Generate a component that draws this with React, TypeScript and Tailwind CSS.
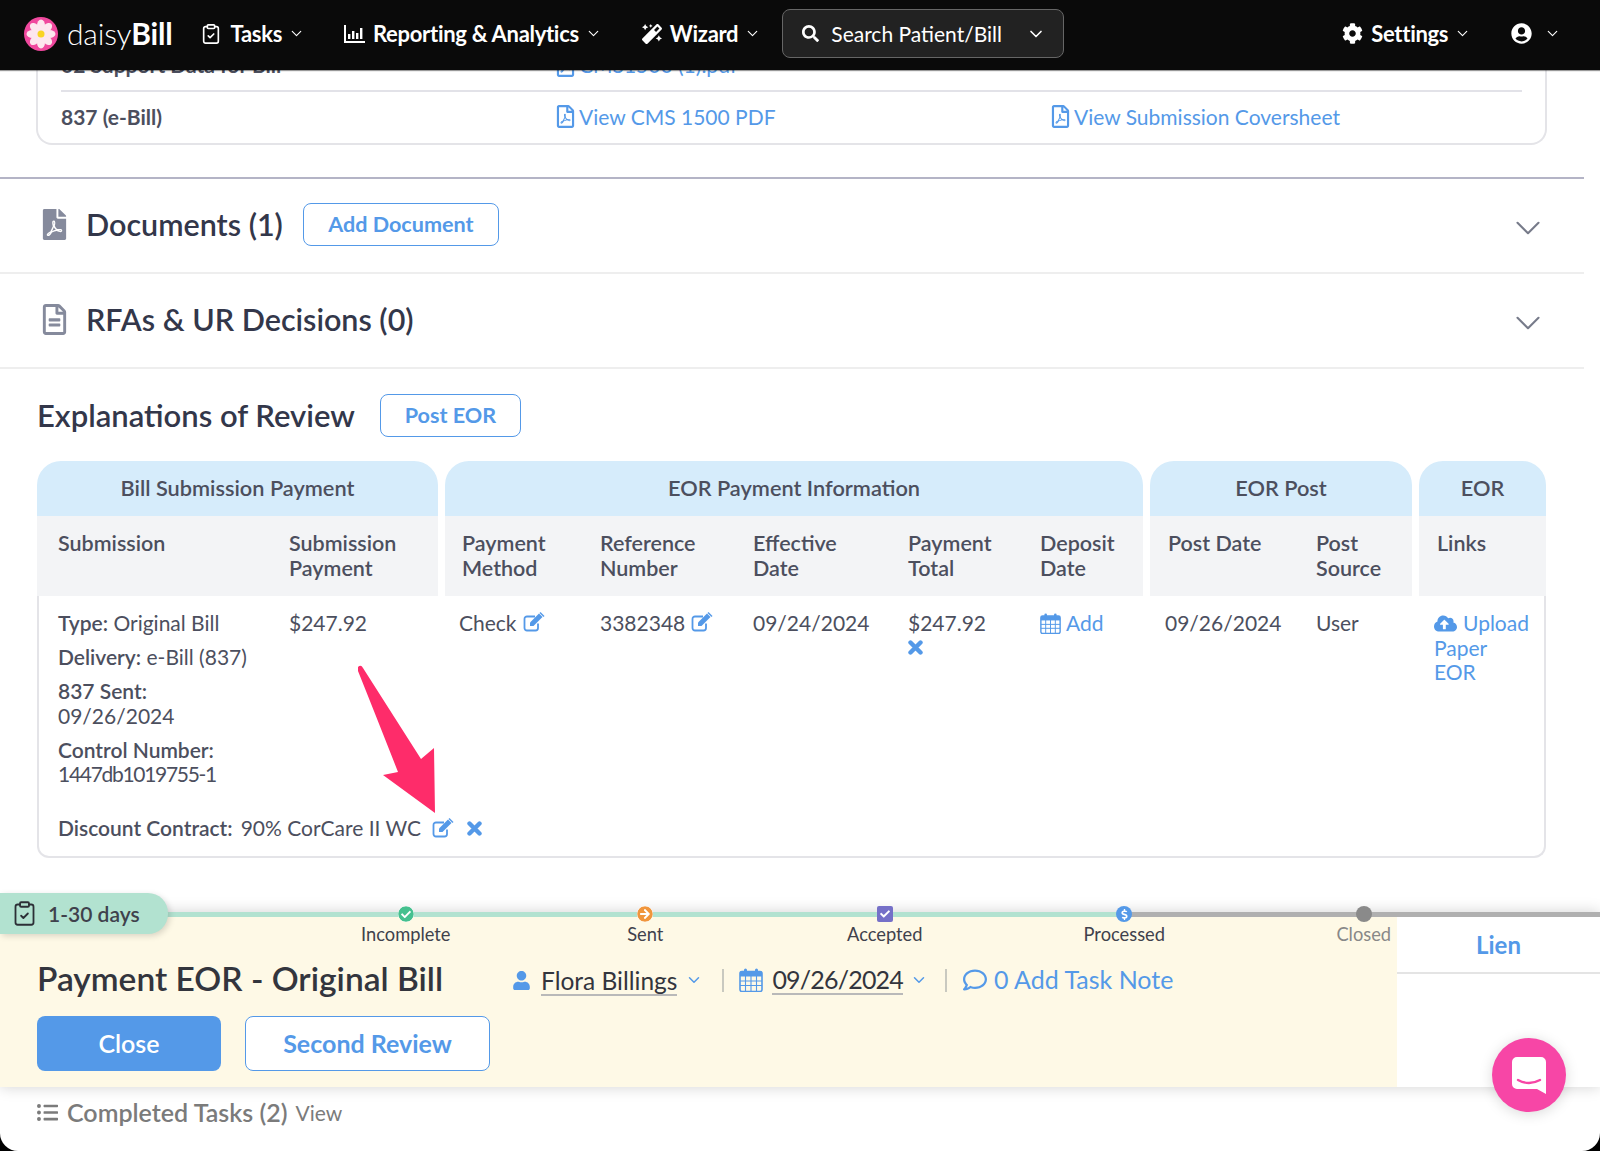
import { ChevronDown, ClipboardCheck } from "lucide-react";
import {
  FaArrowCircleRight,
  FaCheck,
  FaCheckCircle,
  FaCloudUploadAlt,
  FaCog,
  FaDollarSign,
  FaFilePdf,
  FaListUl,
  FaMagic,
  FaRegComment,
  FaRegFileAlt,
  FaRegFilePdf,
  FaSearch,
  FaUser,
  FaUserCircle,
} from "react-icons/fa";

const FONT = "[font-family:Lato,'Noto_Sans',sans-serif]";

function Logo() {
  const petals = [0, 45, 90, 135, 180, 225, 270, 315];
  return (
    <svg width="34" height="34" viewBox="0 0 34 34">
      <circle cx="17" cy="17" r="17" fill="#f0489e" />
      {petals.map((deg) => (
        <ellipse
          key={deg}
          cx="17"
          cy="8.5"
          rx="4"
          ry="6"
          fill="#fde6ee"
          transform={`rotate(${deg} 17 17)`}
        />
      ))}
      <circle cx="17" cy="17" r="3.5" fill="#f9d423" />
    </svg>
  );
}

function ChartIcon() {
  return (
    <svg width="21" height="18" viewBox="0 0 21 18" fill="white">
      <rect x="0" y="0" width="2" height="18" />
      <rect x="0" y="16" width="21" height="2" />
      <rect x="4" y="9" width="2.4" height="5" />
      <rect x="8" y="6" width="2.4" height="8" />
      <rect x="12" y="8" width="2.4" height="6" />
      <rect x="16" y="3" width="2.4" height="11" />
    </svg>
  );
}

// old font-awesome pencil-square, the pencil is filled
function EditIcon({ className = "" }: { className?: string }) {
  return (
    <svg width="22" height="20" viewBox="0 0 22 20" className={`text-[#5499e8] ${className}`}>
      <path
        d="M15 11.5V16a2.5 2.5 0 0 1-2.5 2.5H4A2.5 2.5 0 0 1 1.5 16V7A2.5 2.5 0 0 1 4 4.5h8"
        fill="none"
        stroke="currentColor"
        strokeWidth="1.8"
      />
      <path d="M7 10.5 16 1.5l3.5 3.5-9 9H7Z" fill="currentColor" />
      <path d="M17.5 0 21.5 4l-1 1-4-4Z" fill="currentColor" />
    </svg>
  );
}

function CloseIcon({ className = "" }: { className?: string }) {
  return (
    <svg width="15" height="15" viewBox="0 0 15 15" className={`text-[#5499e8] ${className}`}>
      <path d="M2.5 2.5 12.5 12.5M12.5 2.5 2.5 12.5" stroke="currentColor" strokeWidth="4.4" strokeLinecap="round" />
    </svg>
  );
}

function CalendarIcon({ size, className = "" }: { size: number; className?: string }) {
  return (
    <svg width={size} height={size} viewBox="0 0 24 24" className={`text-[#5499e8] ${className}`}>
      <rect x="1" y="3.5" width="22" height="20" rx="2" fill="none" stroke="currentColor" strokeWidth="1.6" />
      <rect x="1" y="3.5" width="22" height="5" fill="currentColor" />
      <path
        d="M1 13h22M1 17.5h22M6.5 8v15M12 8v15M17.5 8v15"
        stroke="currentColor"
        strokeWidth="1.1"
        fill="none"
      />
      <rect x="5" y="0.5" width="3" height="6" rx="1.5" fill="currentColor" />
      <rect x="16" y="0.5" width="3" height="6" rx="1.5" fill="currentColor" />
    </svg>
  );
}

function NavItem({
  icon,
  label,
  className,
}: {
  icon: React.ReactNode;
  label: string;
  className: string;
}) {
  return (
    <div className={`flex items-center ${className}`}>
      {icon}
      <span className="ml-2 text-[22px] font-bold tracking-[-0.3px] text-white">{label}</span>
      <ChevronDown size={17} className="ml-[6px] text-white" strokeWidth={1.6} />
    </div>
  );
}

function NavBar() {
  return (
    <header className="relative z-10 flex h-[70px] items-center bg-[#0a0a0a] pb-[3px] pl-[24px] shadow-[0_1px_1px_rgba(0,0,0,0.4)]">
      <Logo />
      <span className="ml-[9px] text-[30px] font-light tracking-[-0.2px] text-white">
        daisy<span className="font-bold">Bill</span>
      </span>
      <NavItem
        className="ml-[28px]"
        icon={<ClipboardCheck size={22} className="text-white" strokeWidth={1.8} />}
        label="Tasks"
      />
      <NavItem className="ml-[39px]" icon={<ChartIcon />} label="Reporting & Analytics" />
      <NavItem className="ml-[40px]" icon={<FaMagic size={20} className="text-white" />} label="Wizard" />
      <div className="ml-[21px] flex h-[49px] w-[282px] items-center rounded-lg border border-[#666] bg-[#222] pl-[19px]">
        <FaSearch size={17} className="text-white" />
        <span className="ml-[12px] w-[195px] text-[21px] text-white">Search Patient/Bill</span>
        <ChevronDown size={20} className="text-white" strokeWidth={2} />
      </div>
      <NavItem className="ml-[278px]" icon={<FaCog size={21} className="text-white" />} label="Settings" />
      <FaUserCircle size={21} className="ml-[40px] text-white" />
      <ChevronDown size={17} className="ml-[12px] text-white" strokeWidth={1.6} />
    </header>
  );
}

function PdfLink({ label, className }: { label: string; className: string }) {
  return (
    <div className={`flex items-center text-[#5499e8] ${className}`}>
      <FaRegFilePdf size={23} />
      <span className="ml-[2px]">{label}</span>
    </div>
  );
}

function BillCard() {
  return (
    <div className="mx-[36px] -mt-[30px] w-[1511px] rounded-b-2xl border-x-2 border-b-2 border-[#e4e4e8] px-[23px] text-[21px] text-[#4c4f5e]">
      <div className="flex h-[52px] items-center border-b-2 border-[#e2e2e8]">
        <span className="w-[493px] font-bold">02 Support Data for Bill</span>
        <PdfLink className="" label="CMS1500 (1).pdf" />
      </div>
      <div className="flex h-[51px] items-center pb-[2px]">
        <span className="w-[493px] font-bold">837 (e-Bill)</span>
        <PdfLink className="w-[495px]" label="View CMS 1500 PDF" />
        <PdfLink className="" label="View Submission Coversheet" />
      </div>
    </div>
  );
}

function OutlineButton({ label, className }: { label: string; className: string }) {
  return (
    <button
      className={`rounded-lg border-[1.5px] border-[#5499e8] bg-white font-bold text-[#5499e8] ${className}`}
    >
      {label}
    </button>
  );
}

function SectionRow({
  icon,
  title,
  children,
}: {
  icon: React.ReactNode;
  title: string;
  children?: React.ReactNode;
}) {
  return (
    <div className="flex h-[95px] w-[1584px] items-center border-b-2 border-[#eeeeee] pb-[2px] pl-[39px] pr-[35px]">
      <span className="w-[47px] text-[#858a9c]">{icon}</span>
      <h2 className="text-[30.5px] font-semibold text-[#33374a]">{title}</h2>
      {children}
      <ChevronDown size={42} className="ml-auto mt-[6px] text-[#777b8a]" strokeWidth={1.2} />
    </div>
  );
}

function GroupHeader({ title, className }: { title: string; className: string }) {
  return (
    <div
      className={`flex h-[55px] items-center justify-center rounded-t-[24px] bg-[#d6ecfb] text-[21.75px] font-semibold text-[#4c4f5e] ${className}`}
    >
      {title}
    </div>
  );
}

function SubHeader({ cols, className }: { cols: { label: string; width: string }[]; className: string }) {
  return (
    <div className={`flex h-[80px] bg-[#f3f4f6] pt-[15px] text-[21.5px] font-semibold leading-[24.5px] text-[#4c4f5e] ${className}`}>
      {cols.map((col) => (
        <div key={col.label} className={col.width}>
          {col.label}
        </div>
      ))}
    </div>
  );
}

function EorTable() {
  return (
    <div className="mx-[37px] w-[1509px]">
      <div className="flex gap-[7px]">
        <GroupHeader title="Bill Submission Payment" className="w-[401px]" />
        <GroupHeader title="EOR Payment Information" className="w-[698px]" />
        <GroupHeader title="EOR Post" className="w-[262px]" />
        <GroupHeader title="EOR" className="w-[127px]" />
      </div>
      <div className="flex gap-[7px]">
        <SubHeader
          className="w-[401px] pl-[21px]"
          cols={[
            { label: "Submission", width: "w-[231px]" },
            { label: "Submission Payment", width: "w-[130px]" },
          ]}
        />
        <SubHeader
          className="w-[698px] pl-[17px]"
          cols={[
            { label: "Payment Method", width: "w-[138px] pr-8" },
            { label: "Reference Number", width: "w-[153px] pr-8" },
            { label: "Effective Date", width: "w-[155px] pr-12" },
            { label: "Payment Total", width: "w-[132px] pr-8" },
            { label: "Deposit Date", width: "w-[90px]" },
          ]}
        />
        <SubHeader
          className="w-[262px] pl-[18px]"
          cols={[
            { label: "Post Date", width: "w-[148px]" },
            { label: "Post Source", width: "w-[90px]" },
          ]}
        />
        <SubHeader className="w-[127px] pl-[18px]" cols={[{ label: "Links", width: "w-[80px]" }]} />
      </div>
      <div className="h-[262px] rounded-b-xl border-x-2 border-b-2 border-[#e4e4e8] pl-[19px] pt-[15px] text-[21px] leading-[24.5px] text-[#4c4f5e]">
        <div className="grid h-[205px] grid-cols-[231px_170px_141px_153px_155px_132px_125px_151px_118px_1fr]">
          <div>
            <p>
              <span className="font-semibold">Type:</span> Original Bill
            </p>
            <p className="mt-[9.5px]">
              <span className="font-semibold">Delivery:</span> e-Bill (837)
            </p>
            <p className="mt-[9.5px]">
              <span className="font-semibold">837 Sent:</span>
              <br />
              09/26/2024
            </p>
            <p className="mt-[9.5px]">
              <span className="font-semibold">Control Number:</span>
              <br />
              <span className="tracking-[-1.3px]">1447db1019755-1</span>
            </p>
          </div>
          <div>$247.92</div>
          <div className="flex items-start">
            Check
            <EditIcon className="ml-[6px] mt-[1px]" />
          </div>
          <div className="flex items-start">
            3382348
            <EditIcon className="ml-[6px] mt-[1px]" />
          </div>
          <div>09/24/2024</div>
          <div>
            $247.92
            <CloseIcon className="mt-[4px]" />
          </div>
          <div className="flex items-start text-[#5499e8]">
            <CalendarIcon size={21} className="mt-[2px]" />
            <span className="ml-[5px]">Add</span>
          </div>
          <div>09/26/2024</div>
          <div>User</div>
          <div className="w-[98px] text-[#5499e8]">
            <FaCloudUploadAlt size={23} className="mr-[6px] inline-block align-[-4px]" />
            Upload Paper EOR
          </div>
        </div>
        <div className="flex items-center">
          <span className="font-semibold">Discount Contract:</span>
          <span className="ml-[8px]">90% CorCare II WC</span>
          <EditIcon className="ml-[11px]" />
          <CloseIcon className="ml-[13px]" />
        </div>
      </div>
    </div>
  );
}

function Arrow() {
  return (
    <svg
      className="pointer-events-none absolute left-[350px] top-[660px] z-[5]"
      width="95"
      height="160"
      viewBox="350 660 95 160"
    >
      <path
        d="M358 667 Q361 664 363 668 L421 759 L434 748 L435 813 L383 775 L398 772 Q376 716 358 671 Z"
        fill="#fe2c6a"
      />
    </svg>
  );
}

const STAGES = [
  { label: "Incomplete", node: <FaCheckCircle size={16} className="rounded-full bg-white text-[#45c08f]" /> },
  { label: "Sent", node: <FaArrowCircleRight size={16} className="rounded-full bg-white text-[#f0953c]" /> },
  {
    label: "Accepted",
    node: (
      <span className="flex h-[16px] w-[16px] items-center justify-center rounded-[2px] bg-[#7570c8]">
        <FaCheck size={10} className="text-white" />
      </span>
    ),
  },
  {
    label: "Processed",
    node: (
      <span className="flex h-[16px] w-[16px] items-center justify-center rounded-full bg-[#5499e8]">
        <FaDollarSign size={11} className="text-white" />
      </span>
    ),
  },
  { label: "Closed", node: <span className="block h-[16px] w-[16px] rounded-full bg-[#8a8a8a]" /> },
];

function Stepper() {
  return (
    <div className="absolute left-[286px] top-[-6px] flex">
      {STAGES.map((stage) => (
        <div key={stage.label} className="flex w-[239.5px] flex-col items-center">
          {stage.node}
          <span
            className={`text-[18.3px] leading-[24px] ${
              stage.label === "Closed" ? "text-[#888]" : "text-[#3f414c]"
            }`}
          >
            {stage.label}
          </span>
        </div>
      ))}
    </div>
  );
}

function TaskPanel() {
  return (
    <div className="relative mt-[54px] shadow-[0_0_14px_rgba(0,0,0,0.18)]">
      <div className="flex h-[5px]">
        <div className="w-[1124px] bg-[#b2e2d0]" />
        <div className="flex-1 bg-[#b0b0b0]" />
      </div>
      <div className="absolute left-0 top-[-19px] z-[2] flex h-[41px] w-[168px] items-center rounded-r-[20px] bg-[#b2e2d0] pl-[11px] shadow-[2px_2px_6px_rgba(0,0,0,0.15)]">
        <ClipboardCheck size={27} className="text-[#2c2f36]" strokeWidth={1.6} />
        <span className="ml-[10px] text-[21px] font-semibold text-[#3f414c]">1-30 days</span>
      </div>
      <Stepper />
      <div className="flex h-[170px]">
        <div className="w-[1397px] bg-[#fef9e6] pl-[37px] pt-[42px]">
          <div className="flex h-[42px] items-center">
            <h3 className="-mt-[3px] w-[475px] text-[33.5px] font-semibold text-[#33353d]">
              Payment EOR - Original Bill
            </h3>
            <FaUser size={19} className="text-[#5499e8]" />
            <span className="ml-[10px] border-b-2 border-[#b9b9b9] pt-[3px] text-[24.5px] leading-[26px] text-[#33353d]">
              Flora Billings
            </span>
            <ChevronDown size={18} className="ml-[8px] text-[#5499e8]" />
            <span className="ml-[19px] h-[23px] w-[2px] bg-[#c9c9c0]" />
            <CalendarIcon size={24} className="ml-[15px]" />
            <span className="ml-[9px] border-b-2 border-[#b9b9b9] text-[25px] leading-[28px] tracking-[-0.8px] text-[#33353d]">
              09/26/2024
            </span>
            <ChevronDown size={18} className="ml-[7px] text-[#5499e8]" />
            <span className="ml-[17px] h-[23px] w-[2px] bg-[#c9c9c0]" />
            <FaRegComment size={24} className="ml-[16px] text-[#5499e8]" />
            <span className="ml-[7px] text-[25px] text-[#5499e8]">0 Add Task Note</span>
          </div>
          <div className="mt-[15px] flex gap-[24px]">
            <button className="h-[55px] w-[184px] rounded-lg bg-[#5499e8] text-[25px] font-semibold text-white">
              Close
            </button>
            <OutlineButton label="Second Review" className="h-[55px] w-[245px] text-[25px]" />
          </div>
        </div>
        <div className="flex-1 bg-white">
          <div className="flex h-[57px] items-center justify-center border-b-2 border-[#e4e4e4] text-[24px] font-bold text-[#5499e8]">
            Lien
          </div>
        </div>
      </div>
    </div>
  );
}

function ChatBubble() {
  return (
    <div className="absolute left-[1492px] top-[1038px] z-[6] flex h-[74px] w-[74px] items-center justify-center rounded-full bg-[#f746a6] shadow-[0_2px_14px_rgba(0,0,0,0.15)]">
      <svg width="34" height="37" viewBox="0 0 34 37">
        <path d="M5 0H29a5 5 0 0 1 5 5V37L25 32H5a5 5 0 0 1-5-5V5a5 5 0 0 1 5-5Z" fill="white" />
        <path d="M6 23q11 6 22 0" fill="none" stroke="#f746a6" strokeWidth="2.4" strokeLinecap="round" />
      </svg>
    </div>
  );
}

export default function App() {
  return (
    <div className={`h-[1151px] w-[1600px] bg-black ${FONT}`}>
      <div className="relative h-full overflow-hidden rounded-b-[18px] bg-white">
        <NavBar />
        <BillCard />
        <div className="mt-[32px] w-[1584px] border-b-2 border-[#b4b4c6]" />
        <SectionRow icon={<FaFilePdf size={31} />} title="Documents (1)">
          <OutlineButton label="Add Document" className="ml-[20px] h-[43px] w-[196px] text-[21.6px]" />
        </SectionRow>
        <SectionRow icon={<FaRegFileAlt size={31} />} title="RFAs & UR Decisions (0)" />
        <div className="flex h-[92px] items-center pl-[37px]">
          <h2 className="text-[31px] font-semibold text-[#33374a]">Explanations of Review</h2>
          <OutlineButton label="Post EOR" className="ml-[25px] h-[43px] w-[141px] text-[21.6px]" />
        </div>
        <EorTable />
        <TaskPanel />
        <div className="mt-[7px] flex items-center pl-[37px] text-[#7b7b7b]">
          <FaListUl size={21} />
          <span className="ml-[9px] text-[25px] font-semibold">Completed Tasks (2)</span>
          <span className="ml-[8px] text-[21px]">View</span>
        </div>
        <Arrow />
        <ChatBubble />
      </div>
    </div>
  );
}
